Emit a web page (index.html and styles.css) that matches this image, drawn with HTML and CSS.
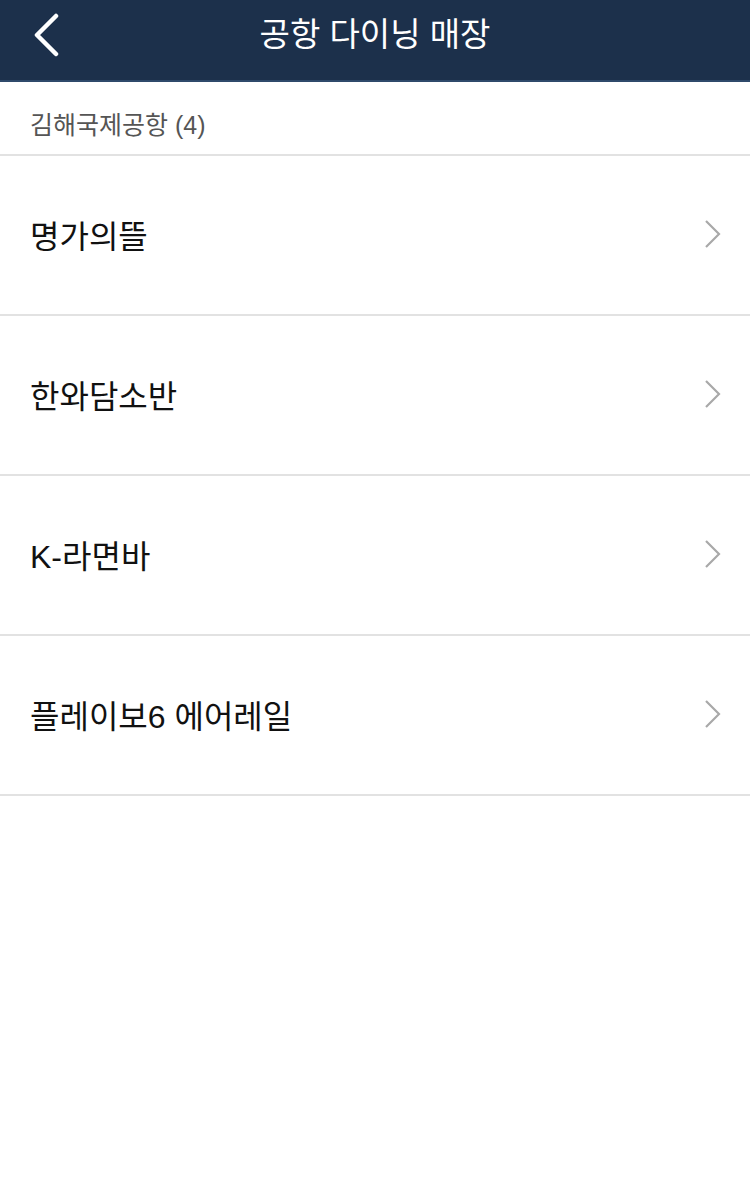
FILE: index.html
```html
<!DOCTYPE html>
<html lang="ko">
<head>
<meta charset="utf-8">
<title>공항 다이닝 매장</title>
<link rel="stylesheet" href="styles.css">
</head>
<body>
<header class="topbar">
  <button class="back" aria-label="뒤로">
    <svg width="32" height="44" viewBox="0 0 32 44"><path d="M26 3 L7 22 L26 41" fill="none" stroke="#fff" stroke-width="4.5" stroke-linecap="round" stroke-linejoin="round"/></svg>
  </button>
  <h1 class="title">공항 다이닝 매장</h1>
</header>
<main>
  <div class="section">김해국제공항 (4)</div>
  <ul class="list">
    <li class="row"><span class="name">명가의뜰</span><svg class="chev" width="18" height="30" viewBox="0 0 18 30"><path d="M2 2 L15 15 L2 28" fill="none" stroke="#a9a9a9" stroke-width="2.2"/></svg></li>
    <li class="row"><span class="name">한와담소반</span><svg class="chev" width="18" height="30" viewBox="0 0 18 30"><path d="M2 2 L15 15 L2 28" fill="none" stroke="#a9a9a9" stroke-width="2.2"/></svg></li>
    <li class="row"><span class="name">K-라면바</span><svg class="chev" width="18" height="30" viewBox="0 0 18 30"><path d="M2 2 L15 15 L2 28" fill="none" stroke="#a9a9a9" stroke-width="2.2"/></svg></li>
    <li class="row"><span class="name">플레이보6 에어레일</span><svg class="chev" width="18" height="30" viewBox="0 0 18 30"><path d="M2 2 L15 15 L2 28" fill="none" stroke="#a9a9a9" stroke-width="2.2"/></svg></li>
  </ul>
</main>
</body>
</html>
```
FILE: styles.css
```css
* { box-sizing: border-box; }
html, body { margin: 0; padding: 0; background: #fff; }
body { font-family: "Liberation Sans", "Noto Sans CJK KR", sans-serif; width: 750px; }
.topbar {
  position: relative;
  height: 82px;
  background: #1c304b;
  border-bottom: 2px solid #2f4a6b;
  display: flex;
  align-items: center;
  justify-content: center;
}
.back {
  position: absolute;
  left: 30px;
  top: 13px;
  padding: 0;
  border: 0;
  background: none;
  display: flex;
}
.title {
  margin: 0;
  color: #fff;
  font-size: 33px;
  font-weight: 400;
  letter-spacing: 0;
  line-height: 1;
  margin-top: -12px;
}
.section {
  height: 74px;
  padding: 28px 0 0 30px;
  font-size: 25px;
  color: #555;
  border-bottom: 2px solid #e2e2e2;
  line-height: 1.2;
}
.list { list-style: none; margin: 0; padding: 0; }
.row {
  height: 160px;
  border-bottom: 2px solid #e2e2e2;
  display: flex;
  align-items: center;
  justify-content: space-between;
  padding: 0 28px 0 30px;
}
.name {
  font-size: 32px;
  color: #111;
  margin-top: -2px;
}
.chev { margin-top: -2px; }
```
